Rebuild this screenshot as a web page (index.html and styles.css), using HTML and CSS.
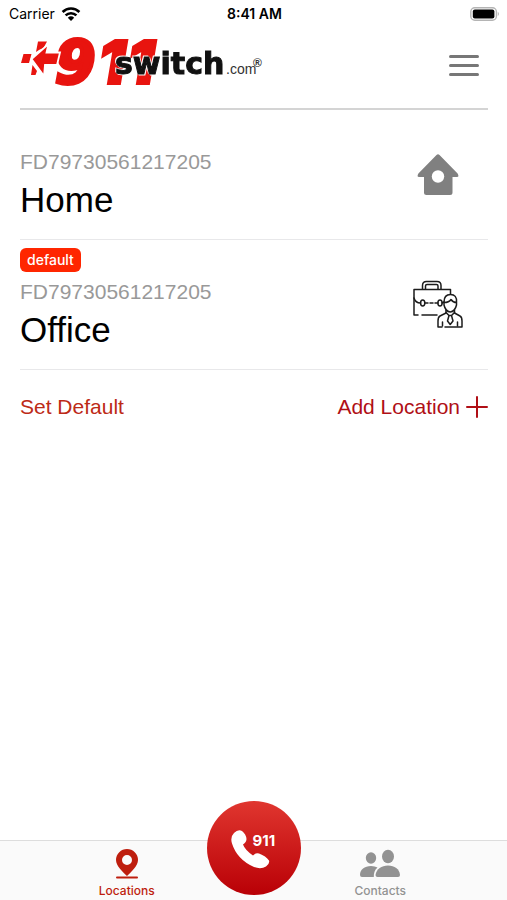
FILE: index.html
```html
<!DOCTYPE html>
<html lang="en">
<head>
<meta charset="utf-8">
<meta name="viewport" content="width=device-width, initial-scale=1">
<title>911switch – Locations</title>
<link rel="stylesheet" href="styles.css">
</head>
<body>
<div class="statusbar">
  <span class="carrier">Carrier
    <svg width="20" height="15" viewBox="0 0 20 15" aria-hidden="true">
      <path d="M10 14L6.800 10.700A4.700 4.700 0 0 1 13.200 10.700Z"/>
      <path d="M4.600 8.400A7.700 7.700 0 0 1 15.400 8.400M1.600 5A12 12 0 0 1 18.400 5" fill="none" stroke="#000" stroke-width="2.600"/>
    </svg>
  </span>
  <span class="clock">8:41 AM</span>
  <svg class="battery" width="30" height="14" viewBox="0 0 30 14" aria-hidden="true">
    <rect x="0.800" y="0.800" width="25.600" height="12.400" rx="4" fill="#fff" stroke="#b4b4b4" stroke-width="1.400"/>
    <rect x="2.800" y="2.600" width="21.600" height="8.800" rx="2"/>
    <path d="M27.800 4.800Q29.800 7 27.800 9.200Z" fill="#aaa"/>
  </svg>
</div>

<main>
  <header class="topbar">
    <svg class="logo" width="246" height="52" viewBox="0 0 246 52" role="img" aria-label="911switch.com">
      <text class="logo-nine" x="35" y="46">9</text>
      <text class="logo-one" x="78" y="47">1</text>
      <text class="logo-one" x="107" y="47">1</text>
      <path d="M18 4.500H27L23.500 11Q19 12.500 16 15ZM1 26L3.500 17H11.500L9 26ZM12.500 28L17 34L15.500 38H11Z" fill="#e8140f"/>
      <path d="M11.500 22L28.500 7L26.500 15.500H40L37 28H25L24 39Z" fill="#e8140f" stroke="#fff" stroke-width="1.800"/>
      <text class="logo-switch" x="95" y="37">switch</text>
      <text class="logo-com" x="206" y="37">.com</text>
      <text class="logo-reg" x="233" y="30">®</text>
    </svg>
    <button class="menu" type="button" aria-label="Menu"><span></span><span></span><span></span></button>
  </header>

  <ul class="locations">
    <li class="location">
      <div class="badge-row"></div>
      <div class="details">
        <span class="code">FD79730561217205</span>
        <h2>Home</h2>
      </div>
      <svg class="icon" width="50" height="50" viewBox="0 0 50 50" aria-hidden="true">
        <path d="M23.500 6Q25 4.500 26.500 6L44.600 24.500Q46.500 28 44 28H39.500V43.500Q39.500 46 37 46H13.500Q11 46 11 43.500V28H6Q3.500 28 5.400 24.500Z" fill="#808080"/>
        <circle cx="25" cy="27.500" r="6.200" fill="#fff"/>
      </svg>
    </li>
    <li class="location">
      <div class="badge-row"><span class="badge">default</span></div>
      <div class="details">
        <span class="code">FD79730561217205</span>
        <h2>Office</h2>
      </div>
      <svg class="icon" width="50" height="50" viewBox="0 0 50 50" fill="none" stroke="#1c1c1c" stroke-width="1.500" stroke-linecap="round" stroke-linejoin="round" aria-hidden="true">
        <path d="M37.500 15V10.500H1V36H5M9 36H24M9.500 10V6.500Q9.500 2.500 13.500 2.500H24Q28 2.500 28 6.500V10M12.500 10V7Q12.500 5.500 14 5.500H23.500Q25 5.500 25 7V10"/>
        <path d="M1 19Q2.500 24 7.500 24M12 24H15M17 24H20M22 24H25M29 24L31 23"/>
        <ellipse cx="9.700" cy="24" rx="2.100" ry="3"/><ellipse cx="27" cy="24" rx="2.100" ry="3"/>
        <path d="M29 48H25V42Q25 38 27 37L33 34V31H41.500V34L47 37Q49 38 49 42V48H32" fill="#fff"/>
        <path d="M31 23Q31 15.500 37.500 15.500T43.500 23V26Q42 32.500 37.200 33Q32.500 32.500 31 26ZM31 23.500Q36 23.500 38 20.500Q40 23.500 43.500 23.500" fill="#fff"/>
        <path d="M33 33.500L36 36.500H38.500L41.500 33.500M36 36.500L34.500 42L37.200 45.500L40 42L38.500 36.500M29.500 43V47M44.500 43V47"/>
      </svg>
    </li>
  </ul>

  <div class="actions">
    <button class="set-default" type="button">Set Default</button>
    <button class="add-location" type="button">Add Location
      <svg width="22" height="22" viewBox="0 0 22 22" stroke="currentColor" stroke-width="2" stroke-linecap="round" aria-hidden="true"><path d="M11 1V21M1 11H21"/></svg>
    </button>
  </div>
</main>

<nav class="tabbar">
  <a class="tab active" href="#locations">
    <svg width="24" height="32" viewBox="0 0 24 32" aria-hidden="true">
      <path fill-rule="evenodd" d="M12 1A11 11 0 0 1 23 12C23 18 16 24 12 28C8 24 1 18 1 12A11 11 0 0 1 12 1ZM12 7A5 5 0 1 0 12 17A5 5 0 1 0 12 7Z" fill="currentColor"/>
      <path d="M2 29.500H22" stroke="currentColor" stroke-width="2" stroke-linecap="round"/>
    </svg>
    Locations
  </a>
  <a class="tab" href="#contacts">
    <svg width="42" height="32" viewBox="0 0 42 32" fill="currentColor" aria-hidden="true">
      <ellipse cx="12" cy="10" rx="5.200" ry="5.700"/>
      <path d="M1 27C1 21.500 5.500 18 12 18Q16 18 18.500 19.500C15.500 22 14.800 25 14.800 29H3Q1 29 1 27Z"/>
      <ellipse cx="29" cy="8.500" rx="6" ry="6.700"/>
      <path d="M16.500 27C17.500 21 22.500 17.500 29 17.500S40.500 21 41 27Q41 29 39 29H18.500Q16.500 29 16.500 27Z"/>
    </svg>
    Contacts
  </a>
  <button class="call" type="button">
    <svg width="40" height="40" viewBox="0 0 40 40" fill="#fff" aria-hidden="true">
      <path d="M3 3Q7 -1 11 1Q15 4 15.500 9Q15.500 12 12 14.500Q14 20 22 25.500Q25 22.500 28 23.500Q35 26 38 30.500Q39 33.500 35 36.500Q30 39.500 23 37Q6 29.500 1 13.500Q-1 7 3 3Z"/>
    </svg>
    <span>911</span>
  </button>
</nav>
</body>
</html>
```
FILE: styles.css
```css
* { box-sizing: border-box; }

body {
  margin: 0;
  min-height: 100vh;
  display: flex;
  flex-direction: column;
  background: #fff;
  color: #000;
  font-family: "Liberation Sans", Arial, sans-serif;
}

button {
  padding: 0;
  border: 0;
  background: none;
  font: inherit;
  cursor: pointer;
}

svg { display: block; flex: none; }

.statusbar {
  display: grid;
  grid-template-columns: 1fr auto 1fr;
  align-items: center;
  height: 28px;
  padding: 0 7px 0 9px;
  font: 14px/16px Inter, sans-serif;
}

.carrier {
  display: flex;
  align-items: center;
  gap: 6px;
}

.clock { font-weight: 600; }

.battery { justify-self: end; }

main {
  flex: 1;
  padding: 0 19px 0 20px;
}

.topbar {
  display: flex;
  align-items: flex-start;
  justify-content: space-between;
  height: 82px;
  padding-top: 9px;
  border-bottom: 2px solid #d4d4d4;
}

.logo { overflow: visible; }

.logo-nine {
  font: italic bold 58px "DejaVu Sans", sans-serif;
  fill: #e8140f;
  stroke: #e8140f;
  stroke-width: 4px;
}

.logo-one {
  font: italic 900 61px Inter, sans-serif;
  fill: #e8140f;
  stroke: #e8140f;
  stroke-width: 2px;
}

.logo-switch {
  font: bold 30px "DejaVu Sans", sans-serif;
  fill: #111;
  stroke: #111;
  stroke-width: 1px;
  filter: drop-shadow(1px 1px 0 #fff) drop-shadow(-1px -1px 0 #fff);
}

.logo-com {
  font: 14px "Liberation Sans", sans-serif;
  fill: #333;
}

.logo-reg {
  font: bold 12px "Liberation Sans", sans-serif;
  fill: #333;
}

.menu {
  display: flex;
  flex-direction: column;
  gap: 6px;
  margin: 18px 9px 0 0;
}

.menu span {
  width: 30px;
  height: 3px;
  border-radius: 2px;
  background: #777;
}

.locations {
  margin: 0;
  padding: 0;
  list-style: none;
}

.location {
  display: grid;
  grid-template-columns: 1fr auto;
  grid-template-rows: 31px auto;
  height: 130px;
  padding-top: 8px;
  border-bottom: 1px solid #e8e8ea;
}

.badge-row { grid-column: 1 / 3; }

.badge {
  display: block;
  width: max-content;
  padding: 0 7px;
  border-radius: 6px;
  background: #ff2600;
  color: #fff;
  font: 500 14px/24px Inter, sans-serif;
}

.code {
  display: block;
  color: #999;
  font-size: 21px;
  line-height: 26px;
}

h2 {
  margin: 5px 0 0;
  font-size: 35px;
  font-weight: 400;
  line-height: 40px;
}

.icon { margin-right: 25px; }

.actions {
  display: flex;
  justify-content: space-between;
  padding-top: 25px;
  font-size: 21px;
  line-height: 24px;
}

.set-default { color: #bd2a16; }

.add-location {
  display: flex;
  align-items: center;
  gap: 6px;
  color: #b00f16;
}

.tabbar {
  position: relative;
  display: grid;
  grid-template-columns: 1fr 1fr;
  height: 60px;
  border-top: 1px solid #ddd;
  background: #fafafa;
}

.tab {
  display: flex;
  flex-direction: column;
  align-items: center;
  gap: 4px;
  padding-top: 7px;
  color: #929292;
  font: 500 12px/14px Inter, sans-serif;
  text-decoration: none;
}

.tab.active { color: #be1e0e; }

.call {
  position: absolute;
  bottom: 5px;
  left: 50%;
  display: flex;
  align-items: flex-start;
  width: 94px;
  height: 94px;
  margin-left: -47px;
  padding: 29px 0 0 24px;
  border-radius: 50%;
  background: linear-gradient(#e0362f, #b90006);
  color: #fff;
}

.call span {
  margin-left: -18px;
  padding-top: 2px;
  font: 700 15px/18px Inter, sans-serif;
}
```
